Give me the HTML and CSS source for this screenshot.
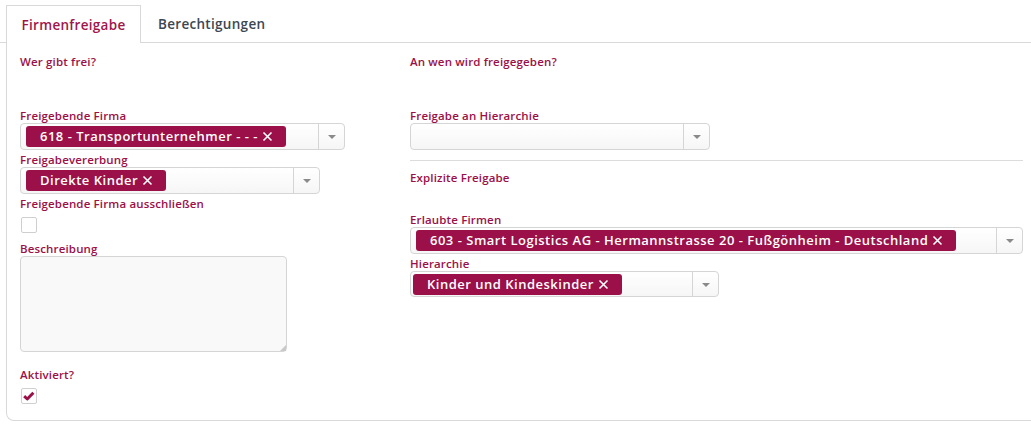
FILE: index.html
```html
<!DOCTYPE html>
<html lang="de">
<head>
<meta charset="utf-8">
<link rel="stylesheet" href="styles.css">
</head>
<body>
<div class="tabs">
  <div class="tab active">Firmenfreigabe</div>
  <div class="tab">Berechtigungen</div>
</div>
<div class="panel">
  <div class="col left">
    <div class="heading">Wer gibt frei?</div>
    <div class="label first">Freigebende Firma</div>
    <div class="select w325">
      <div class="choices"><span class="tag">618 - Transportunternehmer - - - <svg class="x" viewBox="0 0 11 11" width="11" height="11"><path d="M1.5 1.5 L9.5 9.5 M9.5 1.5 L1.5 9.5" stroke="#fff" stroke-width="1.6" fill="none"/></svg></span></div>
      <div class="arrow"><span class="tri"></span></div>
    </div>
    <div class="label">Freigabevererbung</div>
    <div class="select w300">
      <div class="choices"><span class="tag">Direkte Kinder <svg class="x" viewBox="0 0 11 11" width="11" height="11"><path d="M1.5 1.5 L9.5 9.5 M9.5 1.5 L1.5 9.5" stroke="#fff" stroke-width="1.6" fill="none"/></svg></span></div>
      <div class="arrow"><span class="tri"></span></div>
    </div>
    <div class="label">Freigebende Firma ausschließen</div>
    <div class="check"></div>
    <div class="label lbl-desc">Beschreibung</div>
    <div class="area-wrap">
      <textarea class="area"></textarea>
    </div>
    <div class="label lbl-act">Aktiviert?</div>
    <div class="check">
      <svg viewBox="0 0 16 16" width="14" height="14"><path d="M2.5 8.2 L6 11.4 L13 4.2" fill="none" stroke="#9b1048" stroke-width="3.4" stroke-linejoin="round"/></svg>
    </div>
  </div>
  <div class="col right">
    <div class="heading">An wen wird freigegeben?</div>
    <div class="label first">Freigabe an Hierarchie</div>
    <div class="select w300 empty">
      <div class="choices"></div>
      <div class="arrow"><span class="tri"></span></div>
    </div>
    <div class="sep"></div>
    <div class="label sub">Explizite Freigabe</div>
    <div class="label lbl-erl">Erlaubte Firmen</div>
    <div class="select full">
      <div class="choices"><span class="tag">603 - Smart Logistics AG - Hermannstrasse 20 - Fußgönheim - Deutschland <svg class="x" viewBox="0 0 11 11" width="11" height="11"><path d="M1.5 1.5 L9.5 9.5 M9.5 1.5 L1.5 9.5" stroke="#fff" stroke-width="1.6" fill="none"/></svg></span></div>
      <div class="arrow"><span class="tri"></span></div>
    </div>
    <div class="label">Hierarchie</div>
    <div class="select w309">
      <div class="choices"><span class="tag">Kinder und Kindeskinder <svg class="x" viewBox="0 0 11 11" width="11" height="11"><path d="M1.5 1.5 L9.5 9.5 M9.5 1.5 L1.5 9.5" stroke="#fff" stroke-width="1.6" fill="none"/></svg></span></div>
      <div class="arrow"><span class="tri"></span></div>
    </div>
  </div>
</div>
</body>
</html>
```
FILE: styles.css
```css
* { box-sizing: border-box; }
body {
  margin: 0;
  background: #fff;
  font-family: "Open Sans", "Noto Sans", sans-serif;
  color: #3d4752;
}
.tabs {
  display: flex;
  padding: 5px 0 0 6px;
  border-bottom: 1px solid #d9d9d9;
  height: 43px;
}
.tab {
  height: 38px;
  display: flex;
  align-items: center;
  font-size: 13.5px;
  font-weight: 600;
  color: #3d4752;
  padding: 0 17px;
  letter-spacing: 0.3px;
}
.tab.active {
  width: 135px;
  justify-content: center;
  padding: 0;
  color: #a0154b;
  border: 1px solid #d9d9d9;
  border-bottom: none;
  background: #fff;
  margin-bottom: -1px;
}
.panel {
  margin-left: 6px;
  height: 378px;
  border-left: 1px solid #d9d9d9;
  border-bottom: 1px solid #d9d9d9;
  border-bottom-left-radius: 8px;
  padding: 11px 8px 0 13px;
  display: grid;
  grid-template-columns: 390px 613px;
}
.col { display: flex; flex-direction: column; align-items: flex-start; }
.heading, .label {
  font-size: 11.5px;
  font-weight: 600;
  color: #9b1048;
  line-height: 15px;
  white-space: nowrap;
  letter-spacing: 0.15px;
}
.heading { line-height: 16px; }
.label { margin-top: 2px; }
.label.first { margin-top: 38px; }
.select {
  height: 27px;
  display: flex;
  border: 1px solid #d5d5d5;
  border-radius: 4px;
  background: linear-gradient(#ffffff, #f6f6f6);
}
.w325 { width: 325px; }
.w300 { width: 300px; }
.w309 { width: 309px; height: 26px; }
.full { width: 613px; }
.choices { flex: 1; display: flex; align-items: flex-start; padding: 2px 0 0 5px; }
.tag {
  height: 21px;
  line-height: 21px;
  background: #9b1048;
  color: #fff;
  font-size: 13px;
  font-weight: 600;
  letter-spacing: 0.5px;
  border-radius: 3px;
  padding: 0 13px 0 14px;
  white-space: nowrap;
  display: flex;
  align-items: center;
}
.w309 .choices { padding-left: 2px; }
.x { margin-left: 4px; }
.arrow {
  width: 26px;
  border-left: 1px solid #d5d5d5;
  display: flex;
  align-items: center;
  justify-content: center;
}
.tri {
  width: 0; height: 0;
  border-left: 4px solid transparent;
  border-right: 4px solid transparent;
  border-top: 4px solid #8a8a8a;
  margin-top: 1px;
}
.check {
  width: 16px;
  height: 16px;
  margin: 6px 0 0 1px;
  border: 1px solid #cfcfcf;
  border-radius: 2px;
  background: #fff;
  display: flex;
  align-items: center;
  justify-content: center;
}
.lbl-desc { margin-top: 8px; }
.area-wrap {
  position: relative;
  width: 267px;
  height: 96px;
}
.area-wrap::after {
  content: "";
  position: absolute;
  right: 1px;
  bottom: 1px;
  width: 0;
  height: 0;
  border-left: 6px solid transparent;
  border-bottom: 6px solid #c9c9c9;
}
textarea.area {
  width: 267px;
  height: 96px;
  border: 1px solid #d5d5d5;
  border-radius: 4px;
  background: #f9f9f9;
  margin: 0;
  display: block;
  resize: none;
  font: inherit;
}
.lbl-act { margin-top: 15px; }
.sep {
  width: 613px;
  height: 1px;
  background: #dcdcdc;
  margin-top: 10px;
}
.label.sub { margin-top: 9px; }
.lbl-erl { margin-top: 27px; }
```
